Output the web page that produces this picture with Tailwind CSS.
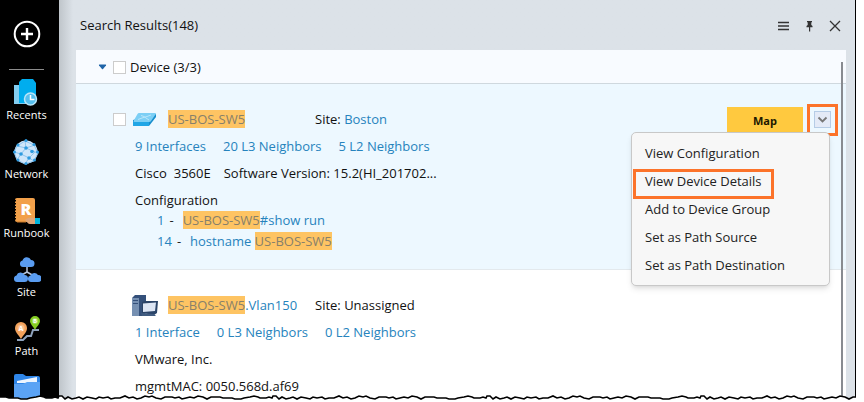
<!DOCTYPE html>
<html lang="en">
<head>
  <meta charset="UTF-8">
  <meta name="viewport" content="width=device-width, initial-scale=1.0">
  <title>Search Results</title>
  <script src="https://cdn.jsdelivr.net/npm/@tailwindcss/browser@4"></script>
</head>
<body class="relative flex h-screen overflow-hidden bg-white pr-2 font-['Open_Sans','Noto_Sans',sans-serif] text-[13px] text-[#111]">

  <!-- Sidebar -->
  <nav class="flex w-[59px] shrink-0 flex-col items-center bg-black pt-5 pr-[6px] text-[11px] text-white">
    <button aria-label="Add" class="h-7 w-7">
      <svg viewBox="0 0 28 28" class="h-7 w-7" fill="none" stroke="#fff" stroke-width="2"><circle cx="14" cy="14" r="12.3"/><path d="M14 8v12M8 14h12" stroke-width="2.4"/></svg>
    </button>
    <hr class="mt-[21px] mb-[9px] w-[35px] border-t border-[#8c8c8c]">
    <a href="#recents" class="flex h-[59px] flex-col items-center">
      <svg viewBox="0 0 28 28" class="h-7 w-7">
        <path d="M2 6h14v19H2z" fill="#83cdf0"/>
        <path d="M10 0h11l3 4v20H7V3z" fill="#00adee"/>
        <circle cx="18.500" cy="20" r="6" fill="#55bfee" stroke="#b9e5f8" stroke-width="1.500"/>
        <path d="M18.500 16v4.500h4" fill="none" stroke="#fff" stroke-width="1.500"/>
      </svg>
      <span class="leading-4">Recents</span>
    </a>
    <a href="#network" class="flex h-[59px] flex-col items-center">
      <svg viewBox="0 0 28 28" class="h-7 w-7">
        <circle cx="14" cy="14" r="11.500" fill="#cfe6fa"/>
        <path d="M5 8l8-5 9 4 4 8-4 8-9 3-8-4-3-8zl9 2 9-3M14 10l-5 6 8 4 6-6-9-4M2 14l7 2-4 6M17 20l-4 6M17 20l5 3M23 14l3 1M13 3l1 7" fill="none" stroke="#8fc4ee" stroke-width="1"/>
        <g fill="#2e9be0"><circle cx="14" cy="10" r="1.800"/><circle cx="9" cy="16" r="1.800"/><circle cx="17" cy="20" r="1.800"/><circle cx="20" cy="13.500" r="1.800"/><circle cx="6" cy="7" r="1.500"/><circle cx="14" cy="2.500" r="1.500"/><circle cx="22" cy="6.500" r="1.500"/><circle cx="25.500" cy="14" r="1.500"/><circle cx="22.500" cy="22" r="1.500"/><circle cx="14" cy="25.500" r="1.500"/><circle cx="6" cy="22" r="1.500"/><circle cx="2.500" cy="14" r="1.500"/></g>
      </svg>
      <span class="leading-4">Network</span>
    </a>
    <a href="#runbook" class="flex h-[59px] flex-col items-center">
      <svg viewBox="0 0 28 28" class="h-7 w-7">
        <rect x="2" y="1" width="20" height="24" rx="2" fill="#f2a04a"/>
        <path d="M2 3v20" stroke="#000" stroke-width="2" stroke-dasharray="1.500 1.500"/>
        <path d="M4 25h9" stroke="#c87928"/>
        <text x="13" y="18" text-anchor="middle" font-size="16" font-weight="800" fill="#fff">R</text>
        <path d="M12 23c3-3 6-2 10-2v6h-5c-2 0-3-2-5-4z" fill="#dfa679"/>
        <path d="M22 21h5v6h-5z" fill="#00b5dd"/>
      </svg>
      <span class="leading-4">Runbook</span>
    </a>
    <a href="#site" class="flex h-[59px] flex-col items-center">
      <svg viewBox="0 0 28 28" class="h-7 w-7">
        <path d="M14 11v5L7 20M14 16l7 4" fill="none" stroke="#b6c5dc" stroke-width="1.500"/>
        <g fill="#5a9cf0">
          <path d="M10 11a3.300 3.300 0 0 1-.5-6.500A4.500 4.500 0 0 1 18 4a3.500 3.500 0 0 1 0 7z"/>
          <path d="M4 26a3.300 3.300 0 0 1-.5-6.500A4.300 4.300 0 0 1 11.500 19a3.500 3.500 0 0 1 0 7z"/>
          <path d="M18 26a3.300 3.300 0 0 1-.5-6.500A4.300 4.300 0 0 1 25 19a3.500 3.500 0 0 1 0 7z"/>
        </g>
      </svg>
      <span class="leading-4">Site</span>
    </a>
    <a href="#path" class="flex h-[59px] flex-col items-center">
      <svg viewBox="0 0 28 28" class="h-7 w-7">
        <path d="M4 25h6l4-4h4l2-6h6" fill="none" stroke="#8fa3bd" stroke-width="2"/>
        <path d="M8 24c-3-5-6-7-6-11a6 6 0 0 1 12 0c0 4-3 6-6 11z" fill="#f2a25c"/>
        <path d="M22 15c-2-4-5-6-5-9a5 5 0 0 1 10 0c0 3-3 5-5 9z" fill="#84cc21"/>
        <circle cx="8" cy="13" r="3.500" fill="#f7bd8c"/><circle cx="22" cy="6" r="3" fill="#a5dc5c"/>
        <text x="8" y="15.500" text-anchor="middle" font-size="7" font-weight="700" fill="#fff">A</text>
        <text x="22" y="8" text-anchor="middle" font-size="6" font-weight="700" fill="#fff">B</text>
      </svg>
      <span class="leading-4">Path</span>
    </a>
    <a href="#files" aria-label="Files">
      <svg viewBox="0 0 28 28" class="h-7 w-7">
        <path d="M1 2q0-2 2-2h7l3 2h12q2 0 2 2v20H1z" fill="#2f86e8"/>
        <path d="M4 7l20-4v6H4z" fill="#eef5ff"/>
        <path d="M1 10h9l4-2h13v20H1z" fill="#5ba3f5"/>
      </svg>
    </a>
  </nav>

  <!-- Search results panel -->
  <div class="flex min-w-0 flex-1 flex-col border-r border-black bg-[#dce2e8] bg-linear-to-r from-[#bfc5ca] to-[#dce2e8] to-[14px] pr-[9px] pl-[17px]">
    <header class="flex h-[50px] shrink-0 items-center justify-between pt-[2px] pl-1">
      <h1>Search Results(148)</h1>
      <div class="flex items-center gap-3 text-[#333]">
        <button aria-label="Menu"><svg viewBox="0 0 14 14" class="h-[14px] w-[14px]" stroke="currentColor" stroke-width="1.300"><path d="M2 3.500h11M2 7h11M2 10.500h11"/></svg></button>
        <button aria-label="Pin"><svg viewBox="0 0 14 14" class="h-[14px] w-[14px]" fill="currentColor"><path d="M5 2h5v1.300H9.300V6l1.200 1v1.200h-6V7l1.200-1V3.300H5zM7 8h1.200v4.500H7z"/></svg></button>
        <button aria-label="Close" class="mr-1"><svg viewBox="0 0 14 14" class="h-[14px] w-[14px]" fill="none" stroke="currentColor" stroke-width="1.300"><path d="M2 2l10 10M12 2L2 12"/></svg></button>
      </div>
    </header>

    <main class="relative flex-1 bg-white leading-[27px]">
      <div class="flex h-[34px] items-center border-b border-[#cfd8de] bg-[#f8fbff] pt-px pl-[22px]">
        <button aria-label="Collapse" class="mr-[6px]"><svg viewBox="0 0 9 6" class="h-[6px] w-[9px]"><path d="M1.500.5h6q1 0 .5 1l-3 3.500q-.5.5-1 0L1 1.500q-.5-1 .5-1z" fill="#1f64a8"/></svg></button>
        <input type="checkbox" id="devices" class="mr-1 h-[13px] w-[13px] appearance-none border border-[#ccc] bg-white">
        <label for="devices">Device (3/3)</label>
      </div>

      <article class="border-b border-[#e3e9ed] bg-[#edf8ff] pt-[22px] pr-4 pb-[17px] pl-[37px]">
        <div class="flex h-[27px] items-center">
          <input type="checkbox" aria-label="Select US-BOS-SW5" class="h-[13px] w-[13px] shrink-0 appearance-none border border-[#ccc] bg-white">
          <svg viewBox="0 0 24 15" class="mr-[11px] ml-[7px] h-[15px] w-6 shrink-0">
            <path d="M0 8v5q0 1 1 1h15l7-9V2z" fill="#168dcc"/>
            <path d="M6 1h16q1.500 0 .8 1L18 9q-.5 1-2 1H1.500Q0 10 .5 9L4.500 2Q5 1 6 1z" fill="#7ccff5"/>
            <path d="M0 9.500q.5.500 1.500.5H16v4H1.500Q0 14 0 13z" fill="#20a6e6"/>
            <path d="M8 3.500l3 1M18 3l-4 1.500M5 7.500l4-1.500M16 8l-3-2M9 6l5-1.500M11 4.500l2 1.500" fill="none" stroke="#b9e6fa"/>
          </svg>
          <div class="w-[147px] shrink-0"><a href="#sw5" class="bg-[#fec463] text-[#87806b]">US-BOS-SW5</a></div>
          <div class="flex-1">Site: <a href="#boston" class="text-[#2683bd]">Boston</a></div>
          <button class="h-[25px] w-[76px] bg-[#ffc93f] text-[11px] font-bold text-[#1c1800]">Map</button>
          <button aria-label="More actions" aria-expanded="true" class="-my-1 -mr-2 ml-1 flex h-8 w-[31px] items-center justify-center border-3 border-[#fc732a]">
            <span class="flex h-[17px] w-[17px] items-center justify-center border border-[#b6cce6] bg-[#e4eaf7]">
              <svg viewBox="0 0 11 9" class="h-[9px] w-[11px]" fill="none" stroke="#777" stroke-width="1.800"><path d="M1.500 2.500l4 4 4-4"/></svg>
            </span>
          </button>
        </div>
        <div class="pl-[22px]">
          <div class="flex gap-[17px] text-[#2683bd]">
            <a href="#i">9 Interfaces</a><a href="#l3">20 L3 Neighbors</a><a href="#l2">5 L2 Neighbors</a>
          </div>
          <div class="flex"><span class="mr-[7px]">Cisco</span><span class="mr-[13px]">3560E</span><span>Software Version: 15.2(HI_201702...</span></div>
          <h2 class="mt-[3px] leading-5">Configuration</h2>
          <div class="flex pl-[22px] leading-[21px] text-[#2683bd]">
            <span>1</span><span class="mr-[9px] ml-[5px] text-[#222]">-</span><a href="#line1"><mark class="bg-[#fec463] text-[#87806b]">US-BOS-SW5</mark>#show run</a>
          </div>
          <div class="flex pl-[22px] leading-[21px] text-[#2683bd]">
            <span>14</span><span class="mr-[9px] ml-[5px] text-[#222]">-</span><a href="#line14">hostname <mark class="bg-[#fec463] text-[#87806b]">US-BOS-SW5</mark></a>
          </div>
        </div>
      </article>

      <article class="pt-[22px] pr-4 pl-[55px]">
        <div class="flex h-[27px] items-center">
          <svg viewBox="0 0 27 22" class="mr-[10px] h-[22px] w-[27px] shrink-0">
            <path d="M1 3l3-3h11v18l-4 3H1z" fill="#34507a"/>
            <path d="M1 3h7v18H1z" fill="#7690b2"/>
            <path d="M2 5.500h5M2 8.500h5" stroke="#34507a"/>
            <path d="M11 7l3-1h13l-1 12-3 2-12-2z" fill="#2b4468"/>
            <path d="M12 8.500l13-1-1 8.500-12 1z" fill="#dce5f4"/>
            <path d="M10 18l13 1 2 2H11z" fill="#405b80"/>
          </svg>
          <div class="w-[147px] shrink-0"><a href="#vlan150" class="text-[#2683bd]"><mark class="bg-[#fec463] text-[#87806b]">US-BOS-SW5</mark>.Vlan150</a></div>
          <div>Site: Unassigned</div>
        </div>
        <div class="pl-1">
          <div class="flex gap-[17px] text-[#2683bd]">
            <a href="#i2">1 Interface</a><a href="#l32">0 L3 Neighbors</a><a href="#l22">0 L2 Neighbors</a>
          </div>
          <p>VMware, Inc.</p>
          <p>mgmtMAC: 0050.568d.af69</p>
        </div>
      </article>

      <!-- Scrollbar -->
      <div class="absolute top-3 right-[3px] bottom-0 w-[2px] bg-[#888b90]"></div>

      <!-- Actions menu -->
      <div role="menu" class="absolute top-[82px] right-4 flex w-[199px] flex-col rounded-[5px] border border-[#c8c8c8] bg-[#f7f7f7] py-[6px] leading-7 text-[#222] shadow-md">
        <button role="menuitem" class="px-[13px] text-left">View Configuration</button>
        <button role="menuitem" class="relative px-[13px] text-left">View Device Details
          <span class="absolute top-[2px] left-px h-[30px] w-[141px] border-3 border-[#fc732a]"></span>
        </button>
        <button role="menuitem" class="px-[13px] text-left">Add to Device Group</button>
        <button role="menuitem" class="px-[13px] text-left">Set as Path Source</button>
        <button role="menuitem" class="px-[13px] text-left">Set as Path Destination</button>
      </div>
    </main>
  </div>

  <!-- Torn bottom edge -->
  <svg viewBox="0 0 864 8" preserveAspectRatio="none" class="absolute bottom-0 left-0 h-2 w-full">
    <defs>
      <path id="tear" d="M0 3L6 3 9 4 18 4 21 5 27 5 30 4 36 3 40 2 44 3 46 4 52 4 55 3 58 4 59 2 62 2 65 5 68 3 72 5 76 4 79 3 83 5 87 3 92 4 96 5 99 3 103 4 108 3 111 5 115 4 120 4 125 2 129 4 133 3 137 5 141 4 145 2 149 3 152 2 156 4 161 5 165 3 172 3 175 4 179 3 182 5 186 4 190 3 194 4 198 2 203 3 207 5 211 3 214 3V9H0z"/>
      <path id="tear-line" d="M0 3L6 3 9 4 18 4 21 5 27 5 30 4 36 3 40 2 44 3 46 4 52 4 55 3 58 4 59 2 62 2 65 5 68 3 72 5 76 4 79 3 83 5 87 3 92 4 96 5 99 3 103 4 108 3 111 5 115 4 120 4 125 2 129 4 133 3 137 5 141 4 145 2 149 3 152 2 156 4 161 5 165 3 172 3 175 4 179 3 182 5 186 4 190 3 194 4 198 2 203 3 207 5 211 3 214 3"/>
    </defs>
    <g fill="#fff"><use href="#tear"/><use href="#tear" x="214"/><use href="#tear" x="428"/><use href="#tear" x="642"/></g>
    <g fill="none" stroke="#000" stroke-width="1.600"><use href="#tear-line"/><use href="#tear-line" x="214"/><use href="#tear-line" x="428"/><use href="#tear-line" x="642"/></g>
  </svg>
</body>
</html>
